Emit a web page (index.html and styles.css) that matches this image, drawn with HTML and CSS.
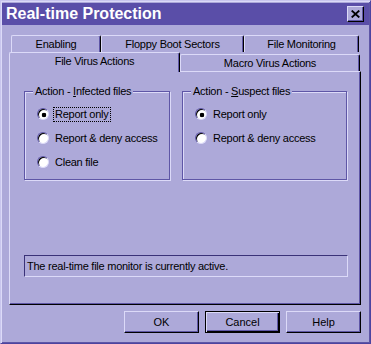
FILE: index.html
```html
<!DOCTYPE html>
<html lang="en">

<head>
    <meta charset="UTF-8">
    <meta name="viewport" content="width=device-width, initial-scale=1.0">
    <title>Real-time Protection</title>
    <link rel="stylesheet" href="styles.css">
</head>

<body>

    <div class="window">
        <div class="titlebar">
            <span class="title">Real-time Protection</span>
            <button class="close-btn">
                <svg width="9" height="8" viewBox="0 0 9 8">
                    <path d="M0.7 0.6 L8.3 7.4 M8.3 0.6 L0.7 7.4" stroke="#000" stroke-width="1.9" />
                </svg>
            </button>
        </div>

        <div class="content">
            <div class="tabs">
                <div class="tab-row back">
                    <div class="tab tab-enabling">Enabling</div>
                    <div class="tab tab-floppy">Floppy Boot Sectors</div>
                    <div class="tab tab-monitor">File Monitoring</div>
                </div>
                <div class="tab-row front">
                    <div class="tab tab-file active">File Virus Actions</div>
                    <div class="tab tab-macro">Macro Virus Actions</div>
                </div>
            </div>

            <div class="panel">
                <div class="groups">
                    <div class="group group-infected">
                        <span class="group-title">Action - <u>I</u>nfected files</span>
                        <label class="option"><span class="radio checked"></span><span class="option-text focused">Report only</span></label>
                        <label class="option"><span class="radio"></span><span class="option-text">Report &amp; deny access</span></label>
                        <label class="option"><span class="radio"></span><span class="option-text">Clean file</span></label>
                    </div>
                    <div class="group group-suspect">
                        <span class="group-title">Action - <u>S</u>uspect files</span>
                        <label class="option"><span class="radio checked"></span><span class="option-text">Report only</span></label>
                        <label class="option"><span class="radio"></span><span class="option-text">Report &amp; deny access</span></label>
                    </div>
                </div>
                <div class="status">The real-time file monitor is currently active.</div>
            </div>

            <div class="buttons">
                <button class="btn">OK</button>
                <button class="btn default">Cancel</button>
                <button class="btn">Help</button>
            </div>
        </div>
    </div>

</body>

</html>
```

FILE: styles.css
```css
html,
body {
    margin: 0
}

body {
    background: #ada9d9;
    font-family: "Liberation Sans", Arial, sans-serif;
    font-size: 11px;
    letter-spacing: -0.25px;
    color: #000;
}

.window {
    box-sizing: border-box;
    width: 371px;
    height: 344px;
    padding: 1px;
    background: #ada9d9;
    border: 1px solid;
    border-color: #c9c6ee #4c44a0 #4c44a0 #c9c6ee;
    box-shadow: inset 1px 1px 0 #dcdaf8, inset -1px -1px 0 #5e56a6;
}

.titlebar {
    display: flex;
    align-items: center;
    height: 22px;
    margin-top: 1px;
    padding: 0 5px 0 4px;
    background: #5a4ea8;
}

.title {
    flex: 1;
    color: #fff;
    font-size: 16px;
    font-weight: bold;
    letter-spacing: 0;
}

.close-btn {
    display: flex;
    align-items: center;
    justify-content: center;
    width: 17px;
    height: 16px;
    padding: 0;
    background: #ada9d9;
    border: 1px solid;
    border-color: #dcdaf8 #000 #000 #dcdaf8;
    box-shadow: inset -1px -1px 0 #5e56a6;
}

.content {
    padding: 0 8px 0 7px;
}

/* tabs */

.tabs {
    margin-top: 10px;
}

.tab-row {
    display: flex;
    align-items: flex-end;
}

.tab-row.back {
    height: 17px;
    padding-left: 2px;
}

.tab-row.front {
    height: 19px;
}

.tab {
    box-sizing: border-box;
    text-align: center;
    line-height: 15px;
    border: 1px solid;
    border-bottom: none;
    border-color: #dcdaf8 #000 #000 #dcdaf8;
    border-radius: 2px 2px 0 0;
    box-shadow: inset -1px 0 0 #5e56a6;
}

.tab-row.back .tab {
    height: 17px;
    padding-top: 1px;
}

.tab-enabling {
    width: 90px;
}

.tab-floppy {
    width: 143px;
}

.tab-monitor {
    width: 115px;
}

.tab-file {
    width: 171px;
}

.tab-macro {
    width: 180px;
    height: 17px;
    padding-top: 1px;
}

.tab.active {
    position: relative;
    z-index: 1;
    height: 20px;
    margin-bottom: -1px;
    padding-top: 1px;
    background: #ada9d9;
}

/* panel */

.panel {
    box-sizing: border-box;
    height: 234px;
    padding: 19px 0 0 14px;
    border: 1px solid;
    border-color: #dcdaf8 #000 #000 #dcdaf8;
    box-shadow: inset -1px -1px 0 #5e56a6;
}

.groups {
    display: flex;
    gap: 12px;
}

.group {
    box-sizing: border-box;
    height: 89px;
    padding-left: 12px;
    border: 1px solid #5e56a6;
    box-shadow: inset 1px 1px 0 #dcdaf8, 1px 1px 0 #dcdaf8;
}

.group-infected {
    width: 146px;
}

.group-suspect {
    width: 165px;
}

.group-title {
    display: block;
    width: fit-content;
    margin: -7px 0 4px -4px;
    padding: 0 2px;
    line-height: 13px;
    background: #ada9d9;
}

.option {
    display: flex;
    align-items: center;
    height: 24px;
}

.radio {
    box-sizing: border-box;
    width: 12px;
    height: 12px;
    margin-right: 4px;
    border-radius: 50%;
    background: #fff;
    border: 1px solid;
    border-color: #5e56a6 #dcdaf8 #dcdaf8 #5e56a6;
    box-shadow: inset 1px 1px 0 #000;
}

.radio.checked {
    background: radial-gradient(circle at 6px 6px, #000 2px, #fff 2.6px);
}

.option-text {
    padding: 0 1px;
    line-height: 13px;
    border: 1px dotted transparent;
}

.option-text.focused {
    border-color: #000;
}

.status {
    box-sizing: border-box;
    width: 324px;
    height: 22px;
    margin-top: 75px;
    padding-left: 2px;
    line-height: 20px;
    border: 1px solid;
    border-color: #3a3278 #dcdaf8 #dcdaf8 #3a3278;
}

/* buttons */

.buttons {
    display: flex;
    justify-content: flex-end;
    gap: 6px;
    margin-top: 6px;
}

.btn {
    box-sizing: border-box;
    width: 75px;
    height: 22px;
    padding: 0;
    font: inherit;
    color: #000;
    background: #ada9d9;
    border: 1px solid;
    border-color: #dcdaf8 #000 #000 #dcdaf8;
    box-shadow: inset -1px -1px 0 #5e56a6;
}

.btn.default {
    border-color: #000;
    box-shadow: inset 1px 1px 0 #dcdaf8, inset -1px -1px 0 #000, inset -2px -2px 0 #5e56a6;
}
```
